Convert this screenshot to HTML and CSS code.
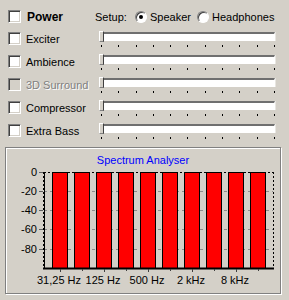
FILE: index.html
```html
<!DOCTYPE html>
<html lang="en">
<head>
    <meta charset="UTF-8">
    <title>Sound Effects</title>
    <link rel="stylesheet" href="styles.css">
</head>
<body>
    <div class="panel">
        <div class="power-row">
            <div class="check-item power">
                <span class="box"></span>
                <span class="power-label">Power</span>
            </div>
            <div class="setup">
                <span class="setup-label">Setup:</span>
                <span class="radio checked"></span>
                <span class="radio-label speaker">Speaker</span>
                <span class="radio"></span>
                <span class="radio-label">Headphones</span>
            </div>
        </div>

        <div class="effect-row">
            <div class="check-item"><span class="box"></span><span>Exciter</span></div>
            <div class="slider">
                <div class="track"></div><span class="thumb"></span>
                <div class="ticks"><span></span><span></span><span></span><span></span><span></span><span></span><span></span><span></span><span></span><span></span><span></span></div>
            </div>
        </div>
        <div class="effect-row">
            <div class="check-item"><span class="box"></span><span>Ambience</span></div>
            <div class="slider">
                <div class="track"></div><span class="thumb"></span>
                <div class="ticks"><span></span><span></span><span></span><span></span><span></span><span></span><span></span><span></span><span></span><span></span><span></span></div>
            </div>
        </div>
        <div class="effect-row">
            <div class="check-item disabled"><span class="box"></span><span>3D Surround</span></div>
            <div class="slider">
                <div class="track"></div><span class="thumb"></span>
                <div class="ticks"><span></span><span></span><span></span><span></span><span></span><span></span><span></span><span></span><span></span><span></span><span></span></div>
            </div>
        </div>
        <div class="effect-row">
            <div class="check-item"><span class="box"></span><span>Compressor</span></div>
            <div class="slider">
                <div class="track"></div><span class="thumb"></span>
                <div class="ticks"><span></span><span></span><span></span><span></span><span></span><span></span><span></span><span></span><span></span><span></span><span></span></div>
            </div>
        </div>
        <div class="effect-row">
            <div class="check-item"><span class="box"></span><span>Extra Bass</span></div>
            <div class="slider">
                <div class="track"></div><span class="thumb"></span>
                <div class="ticks"><span></span><span></span><span></span><span></span><span></span><span></span><span></span><span></span><span></span><span></span><span></span></div>
            </div>
        </div>

        <div class="group">
            <svg class="chart" width="274" height="145" viewBox="6 146 274 145">
                <text class="chart-title" x="143" y="162" text-anchor="middle">Spectrum Analyser</text>

                <!-- grid -->
                <g class="grid">
                    <line x1="44" y1="189.5" x2="273" y2="189.5"/>
                    <line x1="44" y1="208.5" x2="273" y2="208.5"/>
                    <line x1="44" y1="227.5" x2="273" y2="227.5"/>
                    <line x1="44" y1="247.5" x2="273" y2="247.5"/>
                </g>
                <g class="y-ticks">
                    <line x1="39" y1="170.5" x2="43" y2="170.5"/>
                    <line x1="39" y1="189.5" x2="43" y2="189.5"/>
                    <line x1="39" y1="208.5" x2="43" y2="208.5"/>
                    <line x1="39" y1="227.5" x2="43" y2="227.5"/>
                    <line x1="39" y1="247.5" x2="43" y2="247.5"/>
                </g>
                <g class="frame">
                    <line x1="44" y1="170.5" x2="273" y2="170.5"/>
                    <line x1="273.5" y1="170" x2="273.5" y2="266"/>
                    <line x1="43.5" y1="170" x2="43.5" y2="266"/>
                </g>
                <line class="axis" x1="44.5" y1="170" x2="44.5" y2="267"/>

                <!-- bars -->
                <g class="bars">
                    <rect x="52.5" y="170.5" width="15" height="96"/>
                    <rect x="74.5" y="170.5" width="15" height="96"/>
                    <rect x="96.5" y="170.5" width="15" height="96"/>
                    <rect x="118.5" y="170.5" width="15" height="96"/>
                    <rect x="140.5" y="170.5" width="15" height="96"/>
                    <rect x="162.5" y="170.5" width="15" height="96"/>
                    <rect x="184.5" y="170.5" width="15" height="96"/>
                    <rect x="206.5" y="170.5" width="15" height="96"/>
                    <rect x="228.5" y="170.5" width="15" height="96"/>
                    <rect x="250.5" y="170.5" width="15" height="96"/>
                </g>

                <line class="x-axis" x1="43" y1="266.5" x2="274" y2="266.5"/>
                <g class="x-ticks">
                    <line x1="60.5" y1="267" x2="60.5" y2="270"/>
                    <line x1="82.5" y1="267" x2="82.5" y2="269"/>
                    <line x1="104.5" y1="267" x2="104.5" y2="270"/>
                    <line x1="126.5" y1="267" x2="126.5" y2="269"/>
                    <line x1="148.5" y1="267" x2="148.5" y2="270"/>
                    <line x1="170.5" y1="267" x2="170.5" y2="269"/>
                    <line x1="192.5" y1="267" x2="192.5" y2="270"/>
                    <line x1="214.5" y1="267" x2="214.5" y2="269"/>
                    <line x1="236.5" y1="267" x2="236.5" y2="270"/>
                    <line x1="258.5" y1="267" x2="258.5" y2="269"/>
                </g>

                <g class="y-labels" text-anchor="end">
                    <text x="37" y="174">0</text>
                    <text x="37" y="193">-20</text>
                    <text x="37" y="212">-40</text>
                    <text x="37" y="231">-60</text>
                    <text x="37" y="251">-80</text>
                </g>
                <g class="x-labels" text-anchor="middle">
                    <text x="59" y="282">31,25 Hz</text>
                    <text x="103" y="282">125 Hz</text>
                    <text x="147" y="282">500 Hz</text>
                    <text x="191" y="282">2 kHz</text>
                    <text x="235" y="282">8 kHz</text>
                </g>
            </svg>
        </div>
    </div>
</body>
</html>
```

FILE: styles.css
```css
/* classic dialog look */
body {
    margin: 0;
    background-color: #d4d0c8;
    font-family: "Liberation Sans", Arial, sans-serif;
    font-size: 11px;
    color: #000;
}

.panel {
    width: 289px;
    height: 300px;
    padding-top: 10px;
    box-sizing: border-box;
}

.power-row {
    display: grid;
    grid-template-columns: 87px auto;
    align-items: center;
    height: 13px;
    padding-left: 8px;
    margin-bottom: 9px;
}

.check-item {
    display: flex;
    align-items: center;
    gap: 5px;
    height: 13px;
}

.box {
    width: 13px;
    height: 13px;
    box-sizing: border-box;
    background: #fff;
    border: 1px solid;
    border-color: #808080 #fff #fff #808080;
    box-shadow: inset 1px 1px #404040, inset -1px -1px #d4d0c8;
}

.power-label {
    font-weight: bold;
    font-size: 12px;
    margin-left: 1px;
}

.disabled .box {
    background: #d4d0c8;
}

.disabled span:last-child {
    color: #808080;
    text-shadow: 1px 1px #fff;
}

.setup {
    display: flex;
    align-items: center;
}

.setup-label {
    width: 40px;
}

.radio {
    width: 12px;
    height: 12px;
    box-sizing: border-box;
    border-radius: 50%;
    background: #fff;
    border: 1px solid;
    border-color: #808080 #fff #fff #808080;
    box-shadow: inset 1px 1px #404040;
    display: flex;
    align-items: center;
    justify-content: center;
}

.radio.checked::after {
    content: "";
    width: 4px;
    height: 4px;
    border-radius: 50%;
    background: #000;
}

.radio-label {
    margin-left: 3px;
}

.radio-label.speaker {
    width: 47px;
}

.effect-row {
    display: grid;
    grid-template-columns: 91px 177px;
    align-items: start;
    height: 15px;
    padding-left: 8px;
    margin-bottom: 8px;
}

.slider {
    position: relative;
    width: 177px;
}

.track {
    margin-left: 1px;
    width: 175px;
    height: 9px;
    box-sizing: border-box;
    background: #fff;
    border-top: 2px solid #6f6f6f;
    border-left: 1px solid #808080;
    border-right: 1px solid #fff;
    border-bottom: 1px solid #fff;
    box-shadow: 1px 0 #e8e6e1;
}

.thumb {
    position: absolute;
    left: 0;
    top: -1px;
    width: 5px;
    height: 11px;
    box-sizing: border-box;
    background: #d4d0c8;
    border-left: 1px solid #fff;
    border-top: 1px solid #fff;
    border-right: 1px solid #404040;
    border-bottom: 1px solid #808080;
}

.ticks {
    display: flex;
    justify-content: space-between;
    width: 174px;
    margin: 4px 0 0 2px;
}

.ticks span {
    width: 1px;
    height: 2px;
    background: #000;
}

.group {
    margin: 6px 0 0 5px;
    width: 276px;
    height: 147px;
    box-sizing: border-box;
    border: 1px solid #808080;
    box-shadow: inset 1px 1px #fff, 1px 1px #fff;
}

.chart {
    display: block;
    font-family: "Liberation Sans", Arial, sans-serif;
    font-size: 11px;
}

.chart-title {
    fill: #0000ff;
}

.grid line {
    stroke: #8c8c8c;
    stroke-width: 1;
    stroke-dasharray: 3 3;
}

.y-ticks line {
    stroke: #606060;
    stroke-width: 1;
}

.frame line {
    stroke: #000;
    stroke-width: 1;
    stroke-dasharray: 2 2;
}

.axis,
.x-axis {
    stroke: #000;
    stroke-width: 1;
}

.x-axis {
    stroke-width: 2;
}

.bars rect {
    fill: #ff0000;
    stroke: #000;
    stroke-width: 1;
}

.x-ticks line {
    stroke: #404040;
    stroke-width: 1;
}
```
